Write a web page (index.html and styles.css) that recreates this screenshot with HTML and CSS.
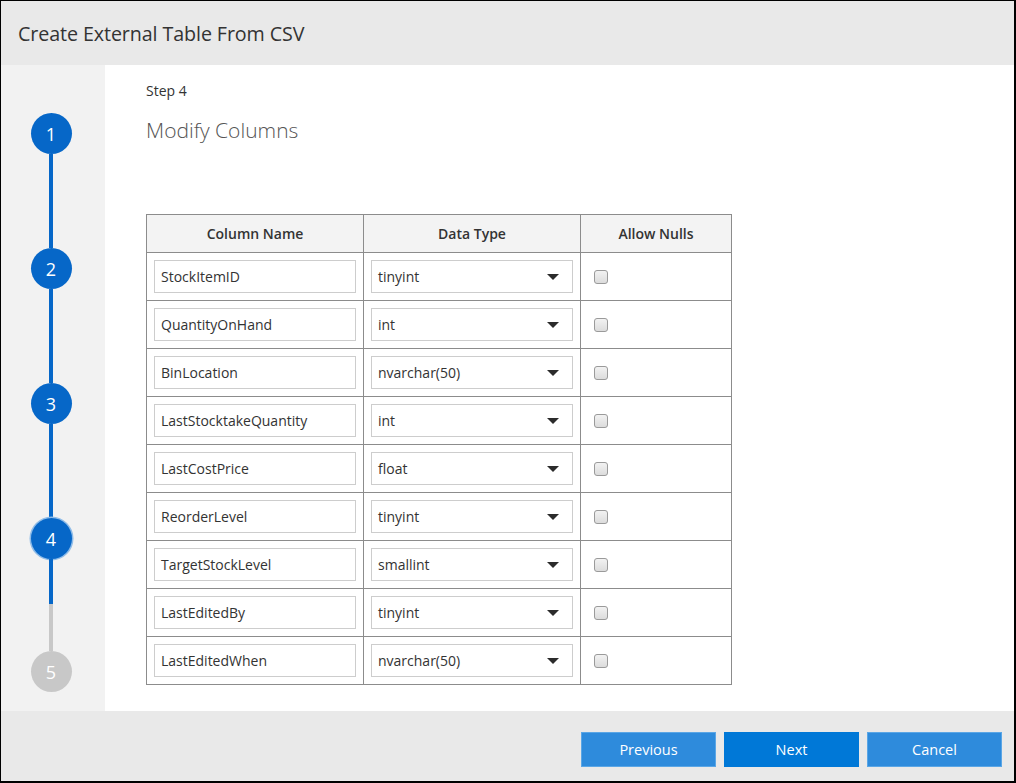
FILE: index.html
```html
<!DOCTYPE html>
<html>
<head>
<meta charset="utf-8">
<link rel="stylesheet" href="styles.css">
</head>
<body>
<div class="dialog">
  <header class="dialog-header">
    <h1 class="dialog-title">Create External Table From CSV</h1>
  </header>
  <div class="dialog-body">
    <nav class="stepper">
      <div class="step done">1</div>
      <div class="connector"></div>
      <div class="step done">2</div>
      <div class="connector"></div>
      <div class="step done">3</div>
      <div class="connector"></div>
      <div class="step current">4</div>
      <div class="connector partial"><span class="fill"></span></div>
      <div class="step todo">5</div>
    </nav>
    <main class="content">
      <div class="step-label">Step 4</div>
      <h2 class="page-title">Modify Columns</h2>
      <table class="columns">
        <colgroup>
          <col class="c1"><col class="c2"><col class="c3">
        </colgroup>
        <thead>
          <tr><th>Column Name</th><th>Data Type</th><th>Allow Nulls</th></tr>
        </thead>
        <tbody>
          <tr><td><div class="field">StockItemID</div></td><td><div class="field select"><span>tinyint</span><i class="caret"></i></div></td><td><span class="check"></span></td></tr>
          <tr><td><div class="field">QuantityOnHand</div></td><td><div class="field select"><span>int</span><i class="caret"></i></div></td><td><span class="check"></span></td></tr>
          <tr><td><div class="field">BinLocation</div></td><td><div class="field select"><span>nvarchar(50)</span><i class="caret"></i></div></td><td><span class="check"></span></td></tr>
          <tr><td><div class="field">LastStocktakeQuantity</div></td><td><div class="field select"><span>int</span><i class="caret"></i></div></td><td><span class="check"></span></td></tr>
          <tr><td><div class="field">LastCostPrice</div></td><td><div class="field select"><span>float</span><i class="caret"></i></div></td><td><span class="check"></span></td></tr>
          <tr><td><div class="field">ReorderLevel</div></td><td><div class="field select"><span>tinyint</span><i class="caret"></i></div></td><td><span class="check"></span></td></tr>
          <tr><td><div class="field">TargetStockLevel</div></td><td><div class="field select"><span>smallint</span><i class="caret"></i></div></td><td><span class="check"></span></td></tr>
          <tr><td><div class="field">LastEditedBy</div></td><td><div class="field select"><span>tinyint</span><i class="caret"></i></div></td><td><span class="check"></span></td></tr>
          <tr><td><div class="field">LastEditedWhen</div></td><td><div class="field select"><span>nvarchar(50)</span><i class="caret"></i></div></td><td><span class="check"></span></td></tr>
        </tbody>
      </table>
    </main>
  </div>
  <footer class="dialog-footer">
    <button class="btn">Previous</button>
    <button class="btn primary">Next</button>
    <button class="btn">Cancel</button>
  </footer>
</div>
</body>
</html>
```

FILE: styles.css
```css
* { box-sizing: border-box; }
html, body { margin: 0; padding: 0; background: #fff; }
body {
  font-family: "Open Sans", "Noto Sans", sans-serif;
  color: #333;
}
.dialog {
  width: 1016px;
  height: 783px;
  border-top: 1px solid #000;
  border-left: 1px solid #000;
  border-right: 2px solid #000;
  border-bottom: 2px solid #000;
  display: flex;
  flex-direction: column;
  background: #fff;
}
.dialog-header {
  height: 64px;
  background: #e9e9e9;
  display: flex;
  align-items: center;
  padding-left: 17px;
  padding-top: 1px;
}
.dialog-title {
  margin: 0;
  font-size: 19.7px;
  font-weight: 400;
  color: #333;
  letter-spacing: -0.1px;
}
.dialog-body {
  height: 646px;
  display: flex;
}
.stepper {
  width: 104px;
  background: #f2f2f2;
  display: flex;
  flex-direction: column;
  align-items: center;
  padding-top: 48px;
  padding-right: 4px;
}
.step {
  width: 41px;
  height: 41px;
  border-radius: 50%;
  color: #fff;
  font-size: 18px;
  display: flex;
  align-items: center;
  justify-content: center;
  flex: none;
}
.step.done, .step.current { background: #0667c8; }
.step.current { box-shadow: 0 0 0 1.5px #8fbce8; }
.step.todo { background: #c8c8c8; }
.connector {
  width: 4px;
  height: 94px;
  background: #0667c8;
  flex: none;
}
.connector.partial {
  height: 92px;
  background: #c8c8c8;
}
.connector.partial .fill {
  display: block;
  height: 45px;
  background: #0667c8;
}
.content {
  flex: 1;
  padding-left: 41px;
  padding-top: 16px;
}
.step-label {
  font-size: 14px;
  line-height: 20px;
  color: #333;
}
.page-title {
  margin: 14px 0 0;
  font-size: 21px;
  font-weight: 300;
  color: #555;
  line-height: 30px;
}
.columns {
  margin-top: 69px;
  border-collapse: collapse;
  table-layout: fixed;
  width: 585px;
}
.columns col.c1 { width: 217px; }
.columns col.c2 { width: 217px; }
.columns col.c3 { width: 151px; }
.columns th, .columns td {
  border: 1px solid #8c8c8c;
}
.columns th {
  height: 38px;
  background: #f3f3f3;
  font-size: 14px;
  font-weight: 600;
  color: #333;
  padding: 0;
  text-align: center;
}
.columns td {
  height: 48px;
  padding: 0 7px;
  vertical-align: middle;
}
.columns td:last-child { padding-left: 13px; padding-top: 1px; }
.field {
  height: 33px;
  border: 1px solid #cdcdcd;
  background: #fff;
  font-size: 14px;
  color: #333;
  display: flex;
  align-items: center;
  padding-left: 6px;
  white-space: nowrap;
}
.field.select {
  justify-content: space-between;
  padding-right: 13px;
}
.caret {
  width: 0;
  height: 0;
  border-left: 6px solid transparent;
  border-right: 6px solid transparent;
  border-top: 6px solid #2b2b2b;
}
.check {
  display: block;
  width: 14px;
  height: 14px;
  border: 1px solid #9a9a9a;
  border-radius: 3px;
  background: linear-gradient(#f2f2f2, #dcdcdc);
}
.dialog-footer {
  flex: 1;
  background: #e9e9e9;
  display: flex;
  justify-content: flex-end;
  align-items: flex-start;
  gap: 8px;
  padding-top: 21px;
  padding-right: 12px;
}
.btn {
  width: 135px;
  height: 35px;
  border: 1px solid #5aa6e6;
  background: #2e8bdc;
  color: #fff;
  font-family: "Open Sans", "Noto Sans", sans-serif;
  font-size: 14.5px;
  padding: 0;
}
.btn.primary {
  background: #0078d7;
  border-color: #0078d7;
}
```
